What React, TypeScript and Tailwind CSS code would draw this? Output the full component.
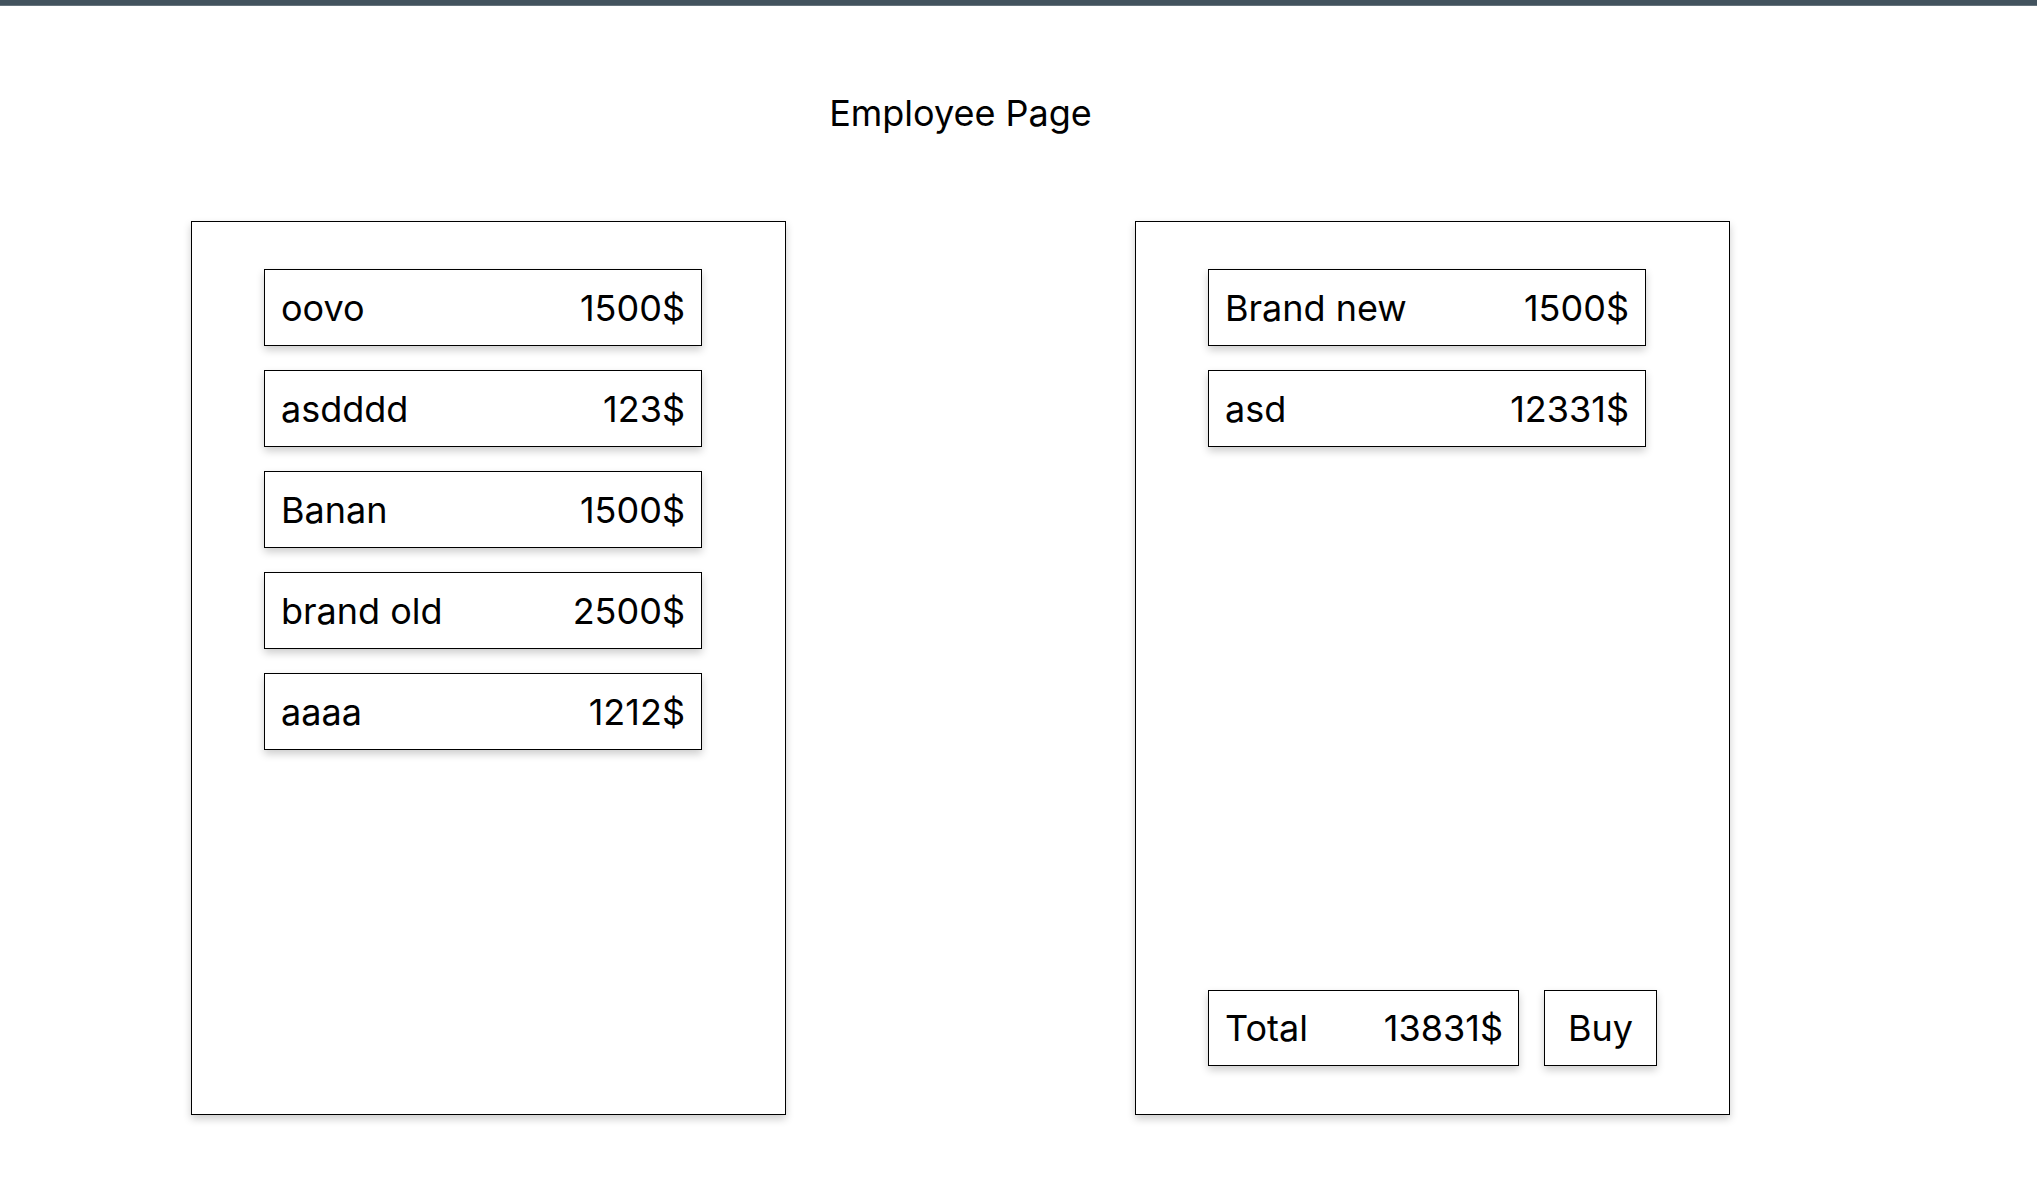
const available = [
  { name: 'oovo', price: 1500 },
  { name: 'asdddd', price: 123 },
  { name: 'Banan', price: 1500 },
  { name: 'brand old', price: 2500 },
  { name: 'aaaa', price: 1212 },
];

const cart = [
  { name: 'Brand new', price: 1500 },
  { name: 'asd', price: 12331 },
];

export default function App() {
  const total = cart.reduce((sum, item) => sum + item.price, 0);

  return (
    <div className="min-h-screen bg-white text-black font-['Inter',sans-serif]">
      {/* Top bar */}
      <div className="h-[6px] bg-[#42535e] border-b border-[#66747d]" />

      <div className="pl-[191px] w-[1730px]">
        <h1 className="mt-[87px] text-center text-[36px] leading-[40px]">Employee Page</h1>

        <div className="mt-[88px] flex gap-[349px]">
          {/* Products */}
          <div className="w-[595px] h-[894px] border border-black shadow-[0_4px_8px_0_rgba(0,0,0,0.2)] pt-[47px] pl-[72px] flex flex-col gap-[24px]">
            {available.map((item) => (
              <ItemRow key={item.name} name={item.name} price={item.price} />
            ))}
          </div>

          {/* Cart */}
          <div className="w-[595px] h-[894px] border border-black shadow-[0_4px_8px_0_rgba(0,0,0,0.2)] pt-[47px] pb-[48px] pl-[72px] flex flex-col justify-between">
            <div className="flex flex-col gap-[24px]">
              {cart.map((item) => (
                <ItemRow key={item.name} name={item.name} price={item.price} />
              ))}
            </div>

            <div className="flex gap-[25px]">
              <div className="w-[311px] h-[76px] border border-black shadow-[0_4px_8px_0_rgba(0,0,0,0.2)] flex items-center justify-between pl-4 pr-[15px] text-[36px]">
                <span>Total</span>
                <span>{total}$</span>
              </div>
              <button className="w-[113px] h-[76px] border border-black shadow-[0_4px_8px_0_rgba(0,0,0,0.2)] flex items-center justify-center text-[36px] bg-white">
                Buy
              </button>
            </div>
          </div>
        </div>
      </div>
    </div>
  );
}

function ItemRow({ name, price }: { name: string; price: number }) {
  return (
    <div className="w-[438px] h-[77px] border border-black shadow-[0_4px_8px_0_rgba(0,0,0,0.2)] flex items-center justify-between px-4 text-[36px]">
      <span>{name}</span>
      <span>{price}$</span>
    </div>
  );
}
